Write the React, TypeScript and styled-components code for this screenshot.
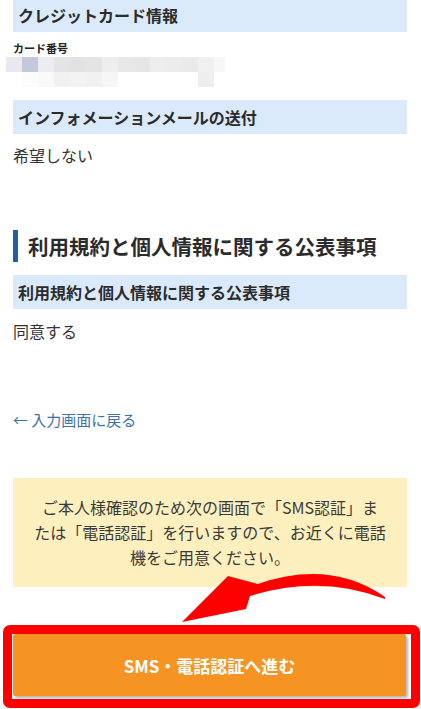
import styled, { createGlobalStyle } from 'styled-components';

const GlobalStyle = createGlobalStyle`
  html, body {
    margin: 0;
    padding: 0;
    background: #ffffff;
  }
  body {
    font-family: "Noto Sans CJK JP", "Noto Sans", sans-serif;
    color: #333333;
  }
`;

const Page = styled.div`
  position: relative;
  padding: 0 14px 0 13px;
  border-top: 1px solid #eeeeee;
  margin-top: -1px;
  overflow: hidden;
  height: 709px;
  box-sizing: border-box;
`;

const Band = styled.div<{ $first?: boolean }>`
  background: #dbeafb;
  height: 34px;
  margin-top: ${(p) => (p.$first ? '-2px' : '13px')};
  padding-left: 5px;
  display: flex;
  align-items: center;
  font-size: 16px;
  font-weight: 700;
  color: #2b2b2b;
`;

const Label = styled.div`
  margin-top: 9px;
  font-size: 11px;
  line-height: 14px;
  font-weight: 700;
  color: #222222;
`;

const Mosaic = styled.div`
  margin: 2px 0 0 -7px;
  display: grid;
  grid-template-columns: repeat(13, 16px) 11px;
  grid-auto-rows: 15px;
`;

const Tile = styled.div<{ $c: string }>`
  background: ${(p) => p.$c};
`;

const Value = styled.div<{ $gap: number }>`
  margin-top: ${(p) => p.$gap}px;
  font-size: 16px;
  line-height: 24px;
  color: #333333;
`;

const SectionTitle = styled.h2`
  margin: 63px 0 0;
  height: 32px;
  display: flex;
  align-items: center;
  gap: 10px;
  font-size: 20.5px;
  font-weight: 700;
  color: #2b2b2b;

  &::before {
    content: '';
    width: 5px;
    height: 32px;
    background: #1f5fa6;
  }
`;

const BackLink = styled.a`
  display: block;
  margin-top: 65px;
  font-size: 15px;
  line-height: 24px;
  color: #3d72aa;
  text-decoration: none;
`;

const Notice = styled.div`
  margin-top: 46px;
  background: #fdf0be;
  padding: 17px 16px;
  text-align: center;
  font-size: 16px;
  line-height: 25px;
  color: #3a3a3a;
`;

const ButtonArea = styled.div`
  position: relative;
  margin-top: 47px;
  margin-right: 1px;
`;

const NextButton = styled.button`
  display: block;
  width: 100%;
  height: 62px;
  border: none;
  border-radius: 2px;
  background: #f59422;
  box-shadow: 2px 2px 3px rgba(0, 0, 0, 0.3);
  color: #ffffff;
  font-family: "Noto Sans CJK JP", "Noto Sans", sans-serif;
  font-size: 17px;
  font-weight: 700;
  cursor: pointer;
`;

const Frame = styled.div`
  position: absolute;
  left: -10px;
  right: -14px;
  top: -9px;
  bottom: -12px;
  border: 9px solid #ff0000;
  border-radius: 7px;
  pointer-events: none;
`;

const Arrow = styled.svg`
  position: absolute;
  left: 167px;
  top: -65px;
  width: 210px;
  height: 56px;
  pointer-events: none;
`;

const row1 = ['#e8e8ee', '#c5c8da', '#ececf2', '#e4e4e6', '#e2e2e4', '#e4e4e4', '#eeeeee', '#e8e8e8', '#e6e6e6', '#eeeeee', '#ececec', '#eaeaea', '#f0f0f0', '#f7f7f7'];
const row2 = ['#ffffff', '#fcfcfc', '#f9f9f9', '#f1f1f1', '#f3f3f3', '#f1f1f1', '#f6f6f6', '#ffffff', '#ffffff', '#ffffff', '#ffffff', '#ffffff', '#eeeeee', '#ffffff'];

const App = () => {
  return (
    <>
      <GlobalStyle />
      <Page>
        <Band $first>クレジットカード情報</Band>
        <Label>カード番号</Label>
        <Mosaic>
          {[...row1, ...row2].map((c, i) => (
            <Tile key={i} $c={c} />
          ))}
        </Mosaic>

        <Band>インフォメーションメールの送付</Band>
        <Value $gap={9}>希望しない</Value>

        <SectionTitle>利用規約と個人情報に関する公表事項</SectionTitle>
        <Band>利用規約と個人情報に関する公表事項</Band>
        <Value $gap={10}>同意する</Value>

        <BackLink href="#">← 入力画面に戻る</BackLink>

        <Notice>
          ご本人様確認のため次の画面で「SMS認証」ま
          <br />
          たは「電話認証」を行いますので、お近くに電話
          <br />
          機をご用意ください。
        </Notice>

        <ButtonArea>
          <NextButton type="button">SMS・電話認証へ進む</NextButton>
          <Frame />
          <Arrow viewBox="180 568 210 56">
            <path
              d="M 385 596 Q 330 558 258 583 L 228 575 L 182 621 L 246 608 L 250 595 Q 320 573 385 598 Z"
              fill="#ff0000"
            />
          </Arrow>
        </ButtonArea>
      </Page>
    </>
  );
};

export default App;
